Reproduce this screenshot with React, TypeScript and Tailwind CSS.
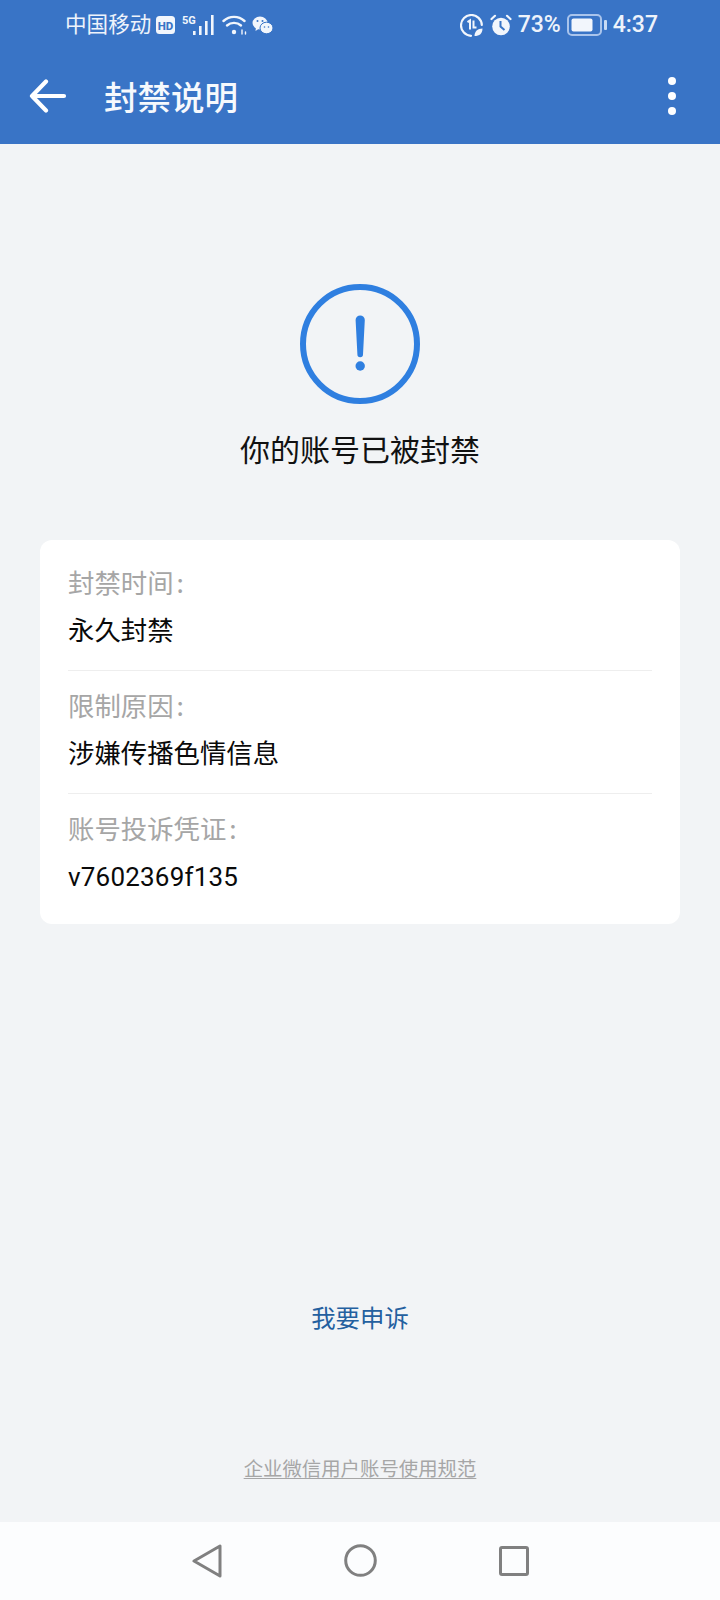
const cjk = { fontFamily: '"Noto Sans CJK SC", "Noto Sans", sans-serif' };

function Row({ label, value, last, latin }: { label: string; value: string; last?: boolean; latin?: boolean }) {
  return (
    <div className={last ? "h-[122px] pt-[15px]" : "h-[123px] pt-[15px] border-b border-[#eeeeee]"}>
      <div className="text-[26.4px] leading-[38px] text-[#a6a6a6]">
        {label}
        <span className="ml-[3px]">:</span>
      </div>
      <div className={"leading-[38px] text-[#0a0a0a] " + (latin ? "mt-[11px] font-['Roboto'] text-[26px] tracking-[0.2px]" : "mt-[9px] text-[26.4px]")}>{value}</div>
    </div>
  );
}

export default function App() {
  return (
    <div className="flex h-[1600px] w-[720px] flex-col overflow-hidden bg-[#f2f4f6]" style={cjk}>
      <header className="h-[144px] shrink-0 bg-[#3974c6] text-white">
        <div className="flex h-[50px] items-center justify-between pl-[65px] pr-[62px]">
          <div className="flex items-center text-[#eef3fb]">
            <span className="-mt-[4px] text-[21.6px] leading-[30px]">中国移动</span>
            <svg width="19" height="18" viewBox="0 0 19 18" className="ml-[5px]">
              <rect width="19" height="18" rx="3.5" fill="#f2f6fc" />
              <text x="9.5" y="13.5" textAnchor="middle" fontSize="11.5" fontWeight="800" fill="#3974c6" fontFamily="Roboto">HD</text>
            </svg>
            <svg width="32" height="20" viewBox="0 0 32 20" className="ml-[7px]">
              <text x="0" y="9" fontSize="11" fontWeight="700" fill="#f2f6fc" fontFamily="Roboto">5G</text>
              <g fill="#f2f6fc">
                <rect x="11" y="16" width="2.6" height="4" />
                <rect x="17" y="11" width="2.6" height="9" />
                <rect x="23" y="6" width="2.6" height="14" />
                <rect x="29" y="0" width="2.6" height="20" />
              </g>
            </svg>
            <svg width="25" height="20" viewBox="0 0 25 20" className="ml-[8px]" fill="none" stroke="#f2f6fc" strokeWidth="2.4" strokeLinecap="round">
              <path d="M1.5 6 C7.5 0.5 16.5 0.5 22.5 6" />
              <path d="M5 10.5 C9 7 15 7 19 10.5" />
              <circle cx="12" cy="17" r="2.2" fill="#f2f6fc" stroke="none" />
              <path d="M20 19v-4M23.5 19v-2" strokeWidth="1.4" />
            </svg>
            <svg width="21" height="19" viewBox="0 0 21 19" className="ml-[5px]">
              <ellipse cx="8" cy="7" rx="7.5" ry="6.5" fill="#f2f6fc" />
              <path d="M4 11 L3.5 15 L8 12 Z" fill="#f2f6fc" />
              <ellipse cx="14.5" cy="12" rx="6.5" ry="5.8" fill="#f2f6fc" stroke="#3974c6" strokeWidth="1" />
              <circle cx="5.5" cy="5" r="1" fill="#3974c6" />
              <circle cx="10.5" cy="5" r="1" fill="#3974c6" />
              <circle cx="12.5" cy="11" r="0.8" fill="#3974c6" />
              <circle cx="16.5" cy="11" r="0.8" fill="#3974c6" />
            </svg>
          </div>
          <div className="flex items-center text-[#eef3fb]">
            <svg width="23" height="23" viewBox="0 0 23 23" fill="none" stroke="#f2f6fc" strokeWidth="2.2">
              <path d="M11 21.8 A10.4 10.4 0 1 1 21.8 11" strokeLinecap="round" />
              <path d="M7.5 8.2 L10 6.5 V15.5M13.5 6.5 V13.5 H16.5" strokeWidth="2" />
              <path d="M14.5 22 C14.5 17.5 17.5 14.5 22.5 14.5 C22.5 19.5 19.5 22 14.5 22 Z" fill="#f2f6fc" stroke="none" />
            </svg>
            <svg width="22" height="22" viewBox="0 0 22 22" className="ml-[7px]">
              <circle cx="11" cy="12.5" r="8.8" fill="#f2f6fc" />
              <path d="M10.5 7V12.5L14.5 16" stroke="#3974c6" strokeWidth="2" fill="none" />
              <path d="M1.5 5 L5 1.8M20.5 5 L17 1.8" stroke="#f2f6fc" strokeWidth="2.2" strokeLinecap="round" />
            </svg>
            <span className="ml-[6px] font-['Roboto'] text-[23px] font-medium leading-[30px]">73%</span>
            <svg width="40" height="22" viewBox="0 0 40 22" className="ml-[6px]">
              <rect x="1" y="1" width="33" height="20" rx="4" fill="none" stroke="#a9c4ec" strokeWidth="2" />
              <rect x="4.5" y="4.5" width="21" height="13" rx="2" fill="#f2f6fc" />
              <rect x="37" y="6" width="3" height="10" rx="1" fill="#c9dbf4" />
            </svg>
            <span className="ml-[6px] font-['Roboto'] text-[23px] font-medium leading-[30px]">4:37</span>
          </div>
        </div>
        <div className="flex h-[94px] items-center pb-[2px]">
          <svg width="38" height="34" viewBox="0 0 38 34" className="ml-[29px]" fill="none" stroke="#ffffff" strokeWidth="4.2" strokeLinecap="round" strokeLinejoin="round">
            <path d="M35 17H3M17 2.5L3 17L17 31.5" />
          </svg>
          <h1 className="ml-[37px] text-[33.5px] font-medium leading-[44px] text-[#f6f9fd]">封禁说明</h1>
          <div className="ml-auto mr-[44px] flex flex-col gap-[7px]">
            <span className="size-[8px] rounded-full bg-white" />
            <span className="size-[8px] rounded-full bg-white" />
            <span className="size-[8px] rounded-full bg-white" />
          </div>
        </div>
      </header>

      <main className="flex flex-1 flex-col items-center">
        <svg width="120" height="120" viewBox="0 0 120 120" className="mt-[140px]">
          <circle cx="60" cy="60" r="57" fill="none" stroke="#2f7fe0" strokeWidth="6" />
          <path d="M55.6 36 a4.6 4.6 0 0 1 9.2 0 L63 70.5 a2.8 2.8 0 0 1 -5.6 0 Z" fill="#2f7fe0" />
          <circle cx="60.2" cy="82" r="4.7" fill="#2f7fe0" />
        </svg>
        <div className="mt-[21px] text-[30px] leading-[46px] text-[#111111]">你的账号已被封禁</div>

        <section className="mt-[69px] h-[384px] w-[640px] rounded-[12px] bg-white px-[28px] pt-[8px]">
          <Row label="封禁时间" value="永久封禁" />
          <Row label="限制原因" value="涉嫌传播色情信息" />
          <Row label="账号投诉凭证" value="v7602369f135" last latin />
        </section>

        <a className="mt-[375px] text-[24.4px] leading-[36px] text-[#24609f]">我要申诉</a>
        <a className="mt-[118px] text-[19.4px] leading-[30px] text-[#a6a6a6] underline underline-offset-2">企业微信用户账号使用规范</a>
      </main>

      <nav className="flex h-[78px] shrink-0 items-center justify-center gap-[122px] bg-[#fcfdfe] pb-[1px]">
        <svg width="30" height="34" viewBox="0 0 30 34" fill="none" stroke="#808080" strokeWidth="3" strokeLinejoin="round">
          <path d="M2 17 L28 2 V32 Z" />
        </svg>
        <svg width="33" height="33" viewBox="0 0 33 33" fill="none" stroke="#808080" strokeWidth="3">
          <circle cx="16.5" cy="16.5" r="14.8" />
        </svg>
        <svg width="30" height="30" viewBox="0 0 30 30" fill="none" stroke="#808080" strokeWidth="3" strokeLinejoin="round">
          <rect x="1.5" y="1.5" width="27" height="27" rx="1.5" />
        </svg>
      </nav>
    </div>
  );
}
